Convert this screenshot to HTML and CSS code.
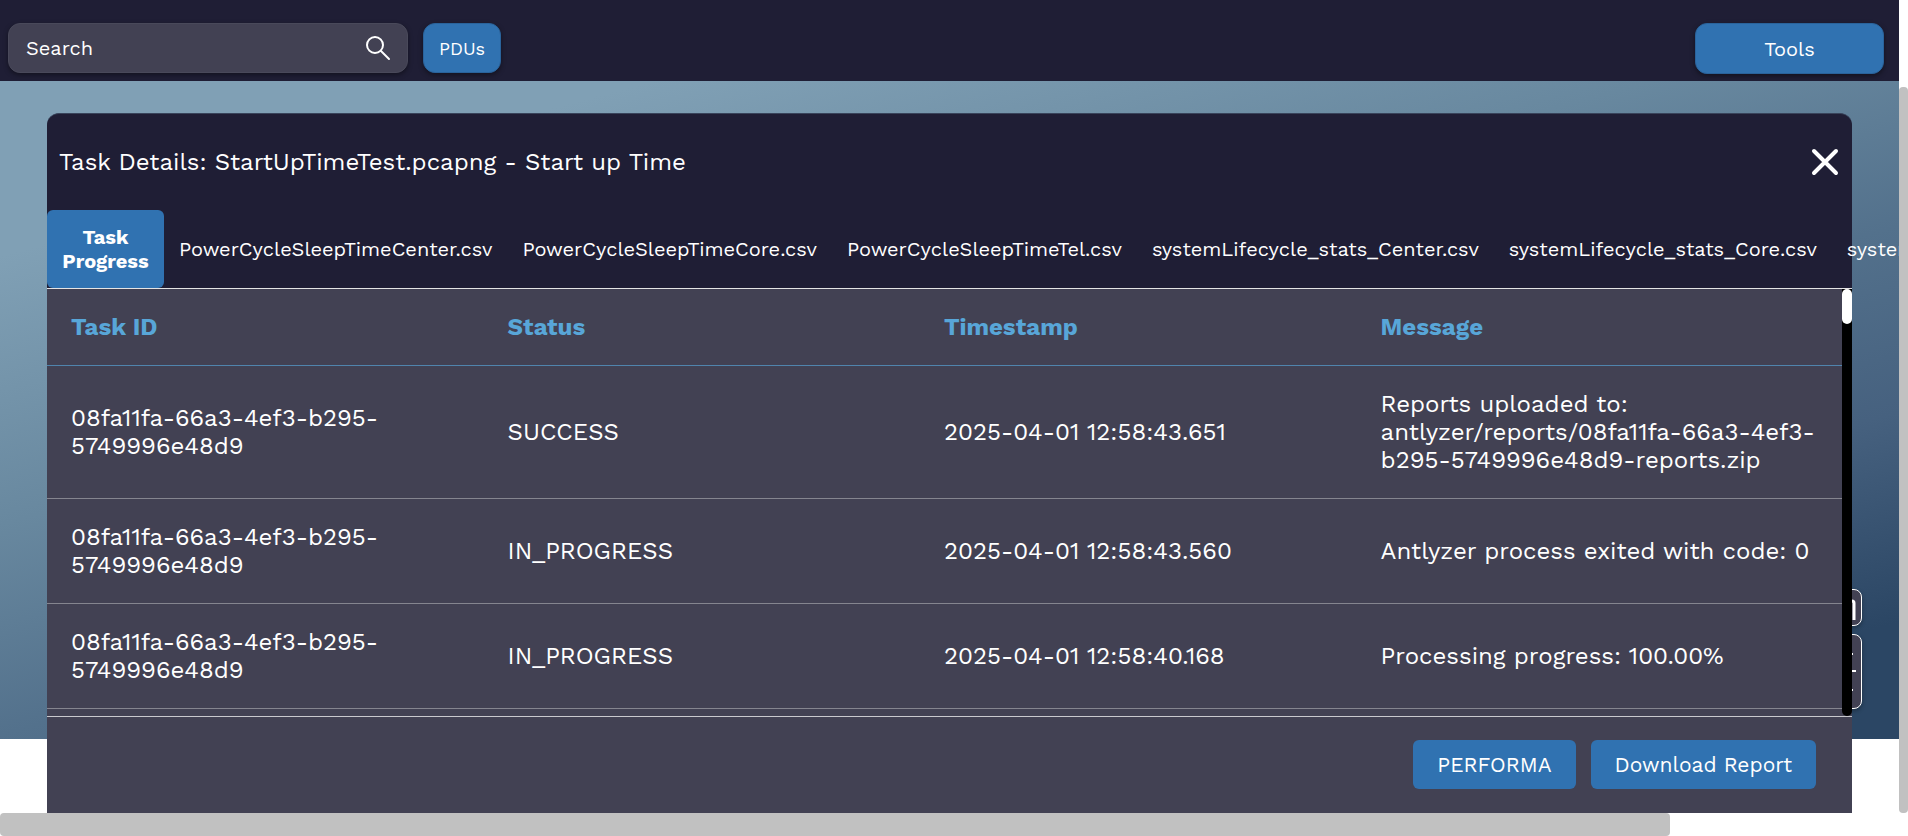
FILE: index.html
```html
<!DOCTYPE html>
<html lang="en">
<head>
<meta charset="utf-8">
<title>Task Details</title>
<link rel="stylesheet" href="styles.css">
</head>
<body>
<div class="window">
  <div class="viewport">
    <header class="topbar">
      <form class="search">
        <input class="search-input" type="text" placeholder="Search" aria-label="Search">
        <button class="search-button" type="button" aria-label="Run search">
          <svg width="26" height="26" viewBox="0 0 26 26" fill="none" stroke="currentColor" stroke-width="2" stroke-linecap="round"><circle cx="10" cy="10" r="8"/><path d="M16 16l8 8"/></svg>
        </button>
      </form>
      <button class="pdus" type="button">PDUs</button>
      <button class="tools" type="button">Tools</button>
    </header>
    <main class="stage">
      <div class="controls">
        <button class="control" type="button" aria-label="Files">
          <svg width="38" height="28" viewBox="0 0 38 28" fill="none" stroke="currentColor" stroke-width="3"><path d="M2 26V9q0-2 2-2h30q2 0 2 2v17"/></svg>
        </button>
        <button class="control control-tall" type="button" aria-label="Options">
          <svg width="38" height="44" viewBox="0 0 38 44" fill="none" stroke="currentColor" stroke-width="2"><path d="M0 21h38M30 4h5M30 40h5"/></svg>
        </button>
      </div>
    </main>
    <section class="modal" role="dialog" aria-labelledby="modal-title">
      <div class="modal-head">
        <h1 class="modal-title" id="modal-title">Task Details: StartUpTimeTest.pcapng - Start up Time</h1>
        <button class="close" type="button" aria-label="Close">
          <svg width="28" height="28" viewBox="0 0 28 28" fill="none" stroke="currentColor" stroke-width="4" stroke-linecap="round"><path d="M3 3l22 22M25 3L3 25"/></svg>
        </button>
      </div>
      <nav class="tabs">
        <button class="tab tab-active" type="button">Task Progress</button>
        <button class="tab" type="button">PowerCycleSleepTimeCenter.csv</button>
        <button class="tab" type="button">PowerCycleSleepTimeCore.csv</button>
        <button class="tab" type="button">PowerCycleSleepTimeTel.csv</button>
        <button class="tab" type="button">systemLifecycle_stats_Center.csv</button>
        <button class="tab" type="button">systemLifecycle_stats_Core.csv</button>
        <button class="tab" type="button">systemLifecycle_stats_Tel.csv</button>
      </nav>
      <div class="modal-body">
        <div class="table-area">
          <table class="log">
            <colgroup><col class="col"><col class="col"><col class="col"><col></colgroup>
            <thead>
              <tr><th>Task ID</th><th>Status</th><th>Timestamp</th><th>Message</th></tr>
            </thead>
            <tbody>
              <tr><td>08fa11fa-66a3-4ef3-b295-5749996e48d9</td><td>SUCCESS</td><td>2025-04-01 12:58:43.651</td><td>Reports uploaded to: antlyzer/reports/08fa11fa-66a3-4ef3-b295-5749996e48d9-reports.zip</td></tr>
              <tr><td>08fa11fa-66a3-4ef3-b295-5749996e48d9</td><td>IN_PROGRESS</td><td>2025-04-01 12:58:43.560</td><td>Antlyzer process exited with code: 0</td></tr>
              <tr><td>08fa11fa-66a3-4ef3-b295-5749996e48d9</td><td>IN_PROGRESS</td><td>2025-04-01 12:58:40.168</td><td>Processing progress: 100.00%</td></tr>
            </tbody>
          </table>
        </div>
        <div class="table-scroll"><div class="table-thumb"></div></div>
      </div>
      <footer class="modal-foot">
        <button class="action" type="button">PERFORMA</button>
        <button class="action" type="button">Download Report</button>
      </footer>
    </section>
  </div>
  <div class="vscroll"><div class="vthumb"></div></div>
  <div class="hscroll"><div class="hthumb"></div></div>
</div>
</body>
</html>
```
FILE: styles.css
```css
* { box-sizing: border-box; }

body {
  margin: 0;
  background: #fff;
  color: #fff;
  font-family: "Work Sans", Inter, "Open Sans", sans-serif;
}

button, input {
  margin: 0;
  padding: 0;
  border: 0;
  background: none;
  color: inherit;
  font: inherit;
}

svg { display: block; }

.window {
  display: grid;
  grid-template-columns: minmax(0, 1fr) 9px;
  grid-template-rows: minmax(0, 1fr) 23px;
  height: 100vh;
  overflow: hidden;
}

.viewport {
  position: relative;
  display: flex;
  flex-direction: column;
  overflow: hidden;
}

.topbar {
  display: flex;
  align-items: flex-start;
  gap: 15px;
  padding: 23px 15px 7px 8px;
  background: #1f1e35;
}

.search {
  display: flex;
  align-items: center;
  width: 400px;
  height: 50px;
  padding: 0 16px 0 17px;
  border: 1px solid #49495a;
  border-radius: 12px;
  background: #424153;
  box-shadow: 0 2px 5px rgba(0, 0, 0, .4);
}

.search-input {
  flex: 1;
  min-width: 0;
  font-size: 20px;
  outline: none;
}

.search-input::placeholder { color: #fff; opacity: 1; }

.pdus, .tools {
  height: 50px;
  border: 1px solid #2a639b;
  border-radius: 12px;
  background: #3072b1;
  box-shadow: 0 2px 5px rgba(0, 0, 0, .4);
}

.pdus { width: 78px; font-size: 18px; }

.tools {
  width: 189px;
  height: 51px;
  margin-left: auto;
  font-size: 20px;
}

.stage {
  position: relative;
  flex: 1;
  margin-bottom: 74px;
  background: linear-gradient(165deg, #80a0b5 15%, #68889f 38%, #53718c 56%, #46617f 72%, #2b4664 90%);
}

.controls {
  position: absolute;
  right: 37px;
  bottom: 30px;
  display: grid;
  gap: 8px;
}

.control {
  display: grid;
  place-items: center;
  width: 50px;
  height: 37px;
  border: 1px solid #fff;
  border-radius: 8px;
  background: #424153;
  box-shadow: 0 2px 4px rgba(0, 0, 0, .3);
}

.control-tall { height: 75px; }

.modal {
  position: absolute;
  inset: 113px 47px 0;
  display: flex;
  flex-direction: column;
  border-top: 1px solid #39445b;
  border-radius: 12px 12px 0 0;
  background: #1f1e35;
}

.modal-head {
  display: flex;
  align-items: center;
  justify-content: space-between;
  height: 96px;
  padding: 0 13px 0 12px;
}

.modal-title {
  margin: 0;
  font-size: 24px;
  font-weight: 400;
}

.tabs {
  display: flex;
  height: 79px;
  border-bottom: 1px solid #e4e4e4;
}

.tab {
  flex: none;
  padding: 0 15px;
  font-size: 20px;
  line-height: 24px;
  white-space: nowrap;
}

.tab-active {
  width: 117px;
  border-radius: 6px;
  background: #3072b1;
  font-weight: 700;
  white-space: normal;
}

.modal-body {
  display: flex;
  flex: 1;
  min-height: 0;
  background: #424153;
}

.table-area {
  flex: 1;
  min-width: 0;
  overflow: hidden;
}

.log {
  width: 100%;
  table-layout: fixed;
  border-collapse: separate;
  border-spacing: 0;
  font-size: 24px;
  line-height: 28px;
  text-align: left;
}

.col { width: 24.32%; }

.log th, .log td { padding: 24px 0 24px 24px; }

.log th {
  border-bottom: 1px solid #5084ad;
  color: #58a6d8;
  font-weight: 700;
}

.log td {
  height: 105px;
  padding-right: 20px;
  border-bottom: 1px solid #85858f;
}

.log tbody tr:first-child td { height: 133px; }

.table-scroll {
  width: 10px;
  border-radius: 0 0 5px 5px;
  background: #000;
}

.table-thumb {
  height: 35px;
  border-radius: 5px;
  background: #fff;
}

.modal-foot {
  display: flex;
  justify-content: flex-end;
  gap: 15px;
  height: 97px;
  padding: 23px 36px 0;
  border-top: 1px solid #c9c9ce;
  background: #424153;
}

.action {
  height: 49px;
  padding: 0 24px;
  border-radius: 6px;
  background: #3072b1;
  font-size: 21px;
}

.vscroll { display: flex; padding-top: 87px; }

.vthumb {
  flex: 1;
  border-radius: 4px;
  background: #c1c1c1;
}

.hscroll { display: flex; grid-column: 1 / -1; }

.hthumb {
  width: 87.5%;
  border-radius: 4px;
  background: #c1c1c1;
}
```
